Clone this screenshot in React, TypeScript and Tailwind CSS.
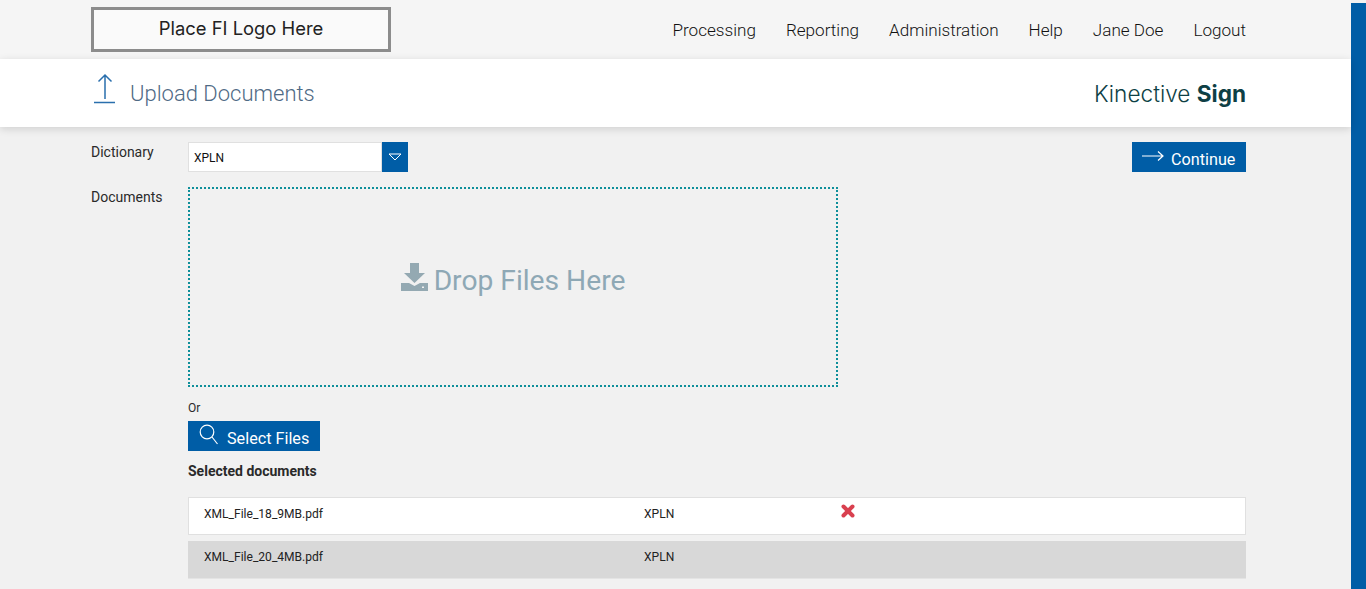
import React from "react";

const nav = ["Processing", "Reporting", "Administration", "Help", "Jane Doe", "Logout"];

function Row({ name, dict, selected }: { name: string; dict: string; selected?: boolean }) {
  return (
    <div
      className={
        selected
          ? "flex h-[38px] items-center bg-[#d8d8d8] border-b border-[#e4e4e4] text-[12.05px] text-[#222]"
          : "flex h-[38px] items-center bg-white border border-[#e0e0e0] text-[12.05px] text-[#222]"
      }
    >
      <div className={selected ? "w-[456px] pl-[16px] pb-[5px]" : "w-[455px] pl-[15px] pb-[3px]"}>{name}</div>
      <div className={selected ? "w-[197px] pb-[5px]" : "w-[197px] pb-[4px]"}>{dict}</div>
      {!selected && (
        <svg width="14" height="14" viewBox="0 0 14 14" className="mb-[10px]">
          <path d="M2.5 2.5 L11.5 11.5 M11.5 2.5 L2.5 11.5" stroke="#d9404f" strokeWidth="4" strokeLinecap="round" />
        </svg>
      )}
    </div>
  );
}

export default function App() {
  return (
    <div className="flex h-[589px] overflow-hidden bg-[#f1f1f1] font-['Roboto',sans-serif]">
      <div className="flex min-w-0 flex-1 flex-col">
        <header className="flex h-[59px] items-center justify-between bg-[#f5f5f5] pl-[91px] pr-[105px]">
          <div className="flex h-[45px] w-[300px] items-center justify-center border-[3px] border-[#8c8c8c] bg-[#fafafa] pb-[2px] font-['Inter',sans-serif] text-[18.4px] text-[#222]">
            Place FI Logo Here
          </div>
          <nav className="flex gap-[30px] pt-[2px] text-[17.1px] font-light text-[#111]">
            {nav.map((n) => (
              <a key={n}>{n}</a>
            ))}
          </nav>
        </header>
        <div className="relative z-10 flex h-[68px] items-center justify-between bg-white pl-[91px] pr-[105px] shadow-[0_2px_8px_rgba(0,0,0,0.14)]">
          <div className="flex items-center">
            <svg width="28" height="32" viewBox="0 0 28 32" className="mb-[8px] mr-[25px] w-[28px]" fill="none" stroke="#2a6fad" strokeWidth="1.5">
              <path d="M14 2 V26 M7.5 8.5 L14 2 L20.5 8.5 M3 29.5 H24" />
            </svg>
            <span className="-ml-[14px] text-[22px] font-light text-[#4f6a85]">Upload Documents</span>
          </div>
          <div className="pt-[2px] font-['Inter',sans-serif] text-[22.6px] font-light text-[#0e3f45]">
            Kinective <span className="font-bold">Sign</span>
          </div>
        </div>
        <main className="flex flex-1 flex-col pl-[91px] pr-[105px] pt-[15px] text-[#2a2a2a]">
          <div className="flex items-start">
            <label className="w-[97px] text-[14px] font-normal">Dictionary</label>
            <div className="flex h-[30px] w-[220px]">
              <div className="flex flex-1 items-center border border-[#e0e0e0] bg-white pl-[5px] pt-[2px] text-[12px] text-[#111]">XPLN</div>
              <div className="flex w-[26px] items-center justify-center bg-[#005da6]">
                <svg width="14" height="8" viewBox="0 0 14 8" fill="none" stroke="#fff" strokeWidth="1">
                  <path d="M1 1 H13 L7 7 Z" />
                </svg>
              </div>
            </div>
            <button className="ml-auto flex h-[30px] w-[114px] items-center bg-[#005da6] pl-[10px] text-[16.2px] text-white">
              <svg width="22" height="12" viewBox="0 0 22 12" fill="none" stroke="#fff" strokeWidth="1.2" className="mb-[3px] mr-[7px]">
                <path d="M0 6 H21 M16 1.5 L21 6 L16 10.5" />
              </svg>
              <span className="pt-[6px]">Continue</span>
            </button>
          </div>
          <div className="mt-[15px] flex items-start">
            <label className="w-[97px] text-[14px]">Documents</label>
            <div>
              <div className="flex h-[200px] w-[650px] items-center justify-center border-2 border-dotted border-[#0e8f9a] pb-[12px]">
                <div className="flex items-center text-[28.2px] text-[#8ea8b5]">
                  <svg width="27" height="28" viewBox="0 0 27 28" className="mr-[6px] mb-[7px]" fill="#94a9b2">
                    <path d="M9 0 H18 V10 H24 L13.5 20 L3 10 H9 Z" />
                    <path d="M0 20 H8 L13.5 23 L19 20 H27 V28 H0 Z" />
                    <rect x="21" y="23.5" width="2" height="1.5" fill="#f1f1f1" />
                  </svg>
                  Drop Files Here
                </div>
              </div>
              <div className="mt-[14px] text-[12px] leading-[14px]">Or</div>
            </div>
          </div>
          <div className="ml-[97px]">
            <button className="mt-[6px] flex h-[30px] w-[132px] items-center bg-[#005da6] pl-[11px] text-[16.2px] text-white">
              <svg width="20" height="22" viewBox="0 0 20 22" fill="none" stroke="#fff" strokeWidth="1.2" className="mb-[2px] mr-[8px]">
                <circle cx="8" cy="8" r="6.8" />
                <path d="M13 13 L18.5 20" />
              </svg>
              <span className="pt-[6px]">Select Files</span>
            </button>
            <div className="mt-[12px] text-[14px] font-bold leading-[16px]">Selected documents</div>
          </div>
          <div className="ml-[97px] mt-[18px] flex flex-col gap-[6px]">
            <Row name="XML_File_18_9MB.pdf" dict="XPLN" />
            <Row name="XML_File_20_4MB.pdf" dict="XPLN" selected />
          </div>
        </main>
      </div>
      <aside className="mt-[3px] w-[15px] shrink-0 bg-[#005da6]" />
    </div>
  );
}
